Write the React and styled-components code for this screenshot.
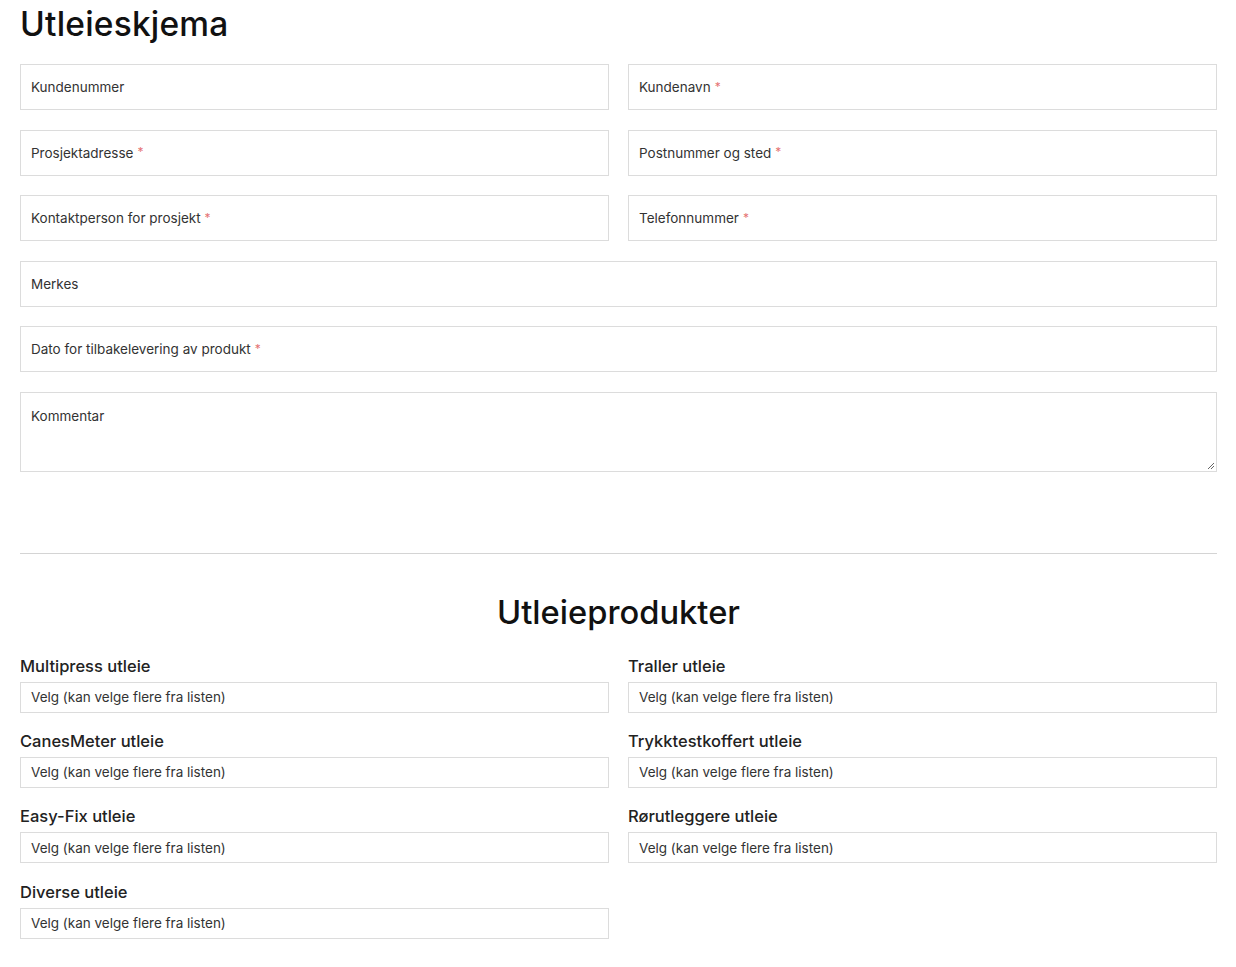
import React from "react";
import styled, { createGlobalStyle } from "styled-components";

const GlobalStyle = createGlobalStyle`
  body {
    margin: 0;
    background: #fff;
    font-family: "Inter", "Open Sans", sans-serif;
    color: #222;
  }
`;

const fields = [
  { label: "Kundenummer" },
  { label: "Kundenavn", required: true },
  { label: "Prosjektadresse", required: true },
  { label: "Postnummer og sted", required: true },
  { label: "Kontaktperson for prosjekt", required: true },
  { label: "Telefonnummer", required: true },
  { label: "Merkes", wide: true },
  { label: "Dato for tilbakelevering av produkt", required: true, wide: true },
];

const products = [
  "Multipress utleie",
  "Traller utleie",
  "CanesMeter utleie",
  "Trykktestkoffert utleie",
  "Easy-Fix utleie",
  "Rørutleggere utleie",
  "Diverse utleie",
];

function App() {
  return (
    <Page>
      <GlobalStyle />
      <Title>Utleieskjema</Title>
      <FieldGrid>
        {fields.map((f) => (
          <InputBox key={f.label} $wide={f.wide}>
            <span>{f.label}</span>
            {f.required && <Star>*</Star>}
          </InputBox>
        ))}
        <TextBox $wide>
          <span>Kommentar</span>
          <Grip viewBox="0 0 10 10">
            <path d="M9 3 L3 9 M9 6 L6 9" stroke="#666" strokeWidth="1" />
          </Grip>
        </TextBox>
      </FieldGrid>
      <Divider />
      <SubTitle>Utleieprodukter</SubTitle>
      <ProductGrid>
        {products.map((p) => (
          <Product key={p}>
            <ProductLabel>{p}</ProductLabel>
            <SelectBox>Velg (kan velge flere fra listen)</SelectBox>
          </Product>
        ))}
      </ProductGrid>
    </Page>
  );
}

export default App;

const Page = styled.div`
  padding: 0 19px 30px 20px;
`;

const Title = styled.h1`
  margin: 0;
  padding-top: 4px;
  height: 60px;
  font-size: 33.5px;
  font-weight: 500;
  color: #111;
  letter-spacing: 0.2px;
`;

const FieldGrid = styled.div`
  display: grid;
  grid-template-columns: 1fr 1fr;
  column-gap: 19px;
  row-gap: 19.5px;
`;

const InputBox = styled.div`
  grid-column: ${(p) => (p.$wide ? "1 / -1" : "auto")};
  height: 46px;
  box-sizing: border-box;
  border: 1px solid #dcdcdc;
  padding: 0 10px;
  display: flex;
  align-items: center;
  font-size: 13.5px;
  color: #333;
`;

const Star = styled.span`
  color: #e57373;
  margin-left: 4px;
  font-size: 12px;
  position: relative;
  top: -1px;
`;

const TextBox = styled.div`
  grid-column: 1 / -1;
  position: relative;
  height: 80px;
  box-sizing: border-box;
  border: 1px solid #dcdcdc;
  padding: 15px 10px;
  font-size: 13.5px;
  color: #333;
`;

const Grip = styled.svg`
  position: absolute;
  right: 1px;
  bottom: 1px;
  width: 10px;
  height: 10px;
`;

const Divider = styled.hr`
  margin: 81px 0 0;
  border: none;
  border-top: 1px solid #d4d4d4;
`;

const SubTitle = styled.h2`
  margin: 38px 0 24px;
  text-align: center;
  font-size: 32.7px;
  font-weight: 500;
  color: #111;
  line-height: 40px;
`;

const ProductGrid = styled.div`
  display: grid;
  grid-template-columns: 1fr 1fr;
  column-gap: 19px;
  row-gap: 18.4px;
`;

const Product = styled.div`
  display: flex;
  flex-direction: column;
  gap: 6px;
`;

const ProductLabel = styled.div`
  font-size: 16.5px;
  font-weight: 500;
  color: #222;
  line-height: 20px;
`;

const SelectBox = styled.div`
  height: 31px;
  box-sizing: border-box;
  border: 1px solid #dcdcdc;
  padding: 0 10px;
  display: flex;
  align-items: center;
  font-size: 13.5px;
  color: #333;
`;
